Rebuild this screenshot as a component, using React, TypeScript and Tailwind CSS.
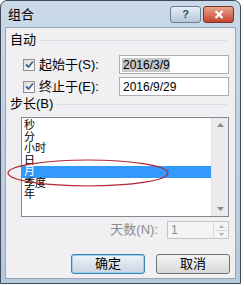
import React from 'react';

const font = { fontFamily: '"Liberation Sans", "Noto Sans CJK SC", sans-serif' };

function Check() {
  return (
    <span className="w-[12px] h-[12px] border border-[#8e8f8f] bg-gradient-to-br from-[#dcdcdc] to-white flex items-center justify-center">
      <svg width="9" height="9" viewBox="0 0 9 9">
        <path d="M1 4.5 L3.5 7 L8 1.5" fill="none" stroke="#4a5f97" strokeWidth="1.8" />
      </svg>
    </span>
  );
}

export default function App() {
  const items = ['秒', '分', '小时', '日', '月', '季度', '年'];
  return (
    <div className="w-[244px] h-[286px] bg-white overflow-hidden" style={font}>
      <div className="w-[241px] h-[284px] rounded-t-[7px] border border-[#3c4a5a] bg-gradient-to-b from-[#c9d9e8] to-[#b5c9dc] flex flex-col px-[4px] pb-[4px]">
        {/* title bar */}
        <div className="h-[26px] flex items-center justify-between shrink-0">
          <span className="text-[13px] leading-[16px] text-black pl-[3px] pt-[2px]">组合</span>
          <div className="flex gap-[2px] pt-[1px] pr-[2px]">
            <div className="w-[31px] h-[17px] rounded-[3px] border border-[#6e7f92] bg-gradient-to-b from-[#e6eef6] to-[#b6c7d8] flex items-center justify-center text-[11px] font-bold text-[#34495e]">?</div>
            <div className="w-[31px] h-[17px] rounded-[3px] border border-[#7a3226] bg-gradient-to-b from-[#e7a38f] to-[#c5432c] flex items-center justify-center">
              <svg width="10" height="9" viewBox="0 0 10 9">
                <path d="M1.5 1 L8.5 8 M8.5 1 L1.5 8" stroke="white" strokeWidth="2.2" />
              </svg>
            </div>
          </div>
        </div>
        {/* body */}
        <div className="flex-1 bg-[#f0eff1] border border-[#9aa5b1] relative text-[13px] leading-[14px] text-black">
          <div className="flex items-center h-[14px] mt-[5px] pl-[4px] pr-[8px] gap-[4px]">
            <span>自动</span>
            <div className="flex-1 h-px bg-[#d5dfe5]" />
          </div>
          <div className="flex flex-col gap-[3px] mt-[8px] pl-[17px] pr-[6px]">
            <div className="flex items-center h-[19px]">
              <Check />
              <span className="ml-[4px] w-[80px]">起始于(S):</span>
              <div className="flex-1 h-[19px] border border-[#abadb3] bg-white flex items-center pl-[2px] text-[12px]">
                <span className="bg-[#c8c8c8] pl-[1px]">2016/3/9</span>
              </div>
            </div>
            <div className="flex items-center h-[19px]">
              <Check />
              <span className="ml-[4px] w-[80px]">终止于(E):</span>
              <div className="flex-1 h-[19px] border border-[#abadb3] bg-white flex items-center pl-[3px] text-[12px]">
                2016/9/29
              </div>
            </div>
          </div>
          <div className="flex items-center h-[14px] mt-[1px] pl-[4px] pr-[8px] gap-[4px]">
            <span>步长(B)</span>
            <div className="flex-1 h-px bg-[#d5dfe5]" />
          </div>
          <div className="mt-[6px] ml-[15px] mr-[6px] h-[100px] border border-[#828790] bg-white flex">
            <div className="flex-1 flex flex-col pt-[2px] text-[11px] leading-[11.5px]">
              {items.map((t) => (
                <div key={t} className={t === '月' ? 'bg-[#3399ff] text-white pl-[2px] h-[11.5px]' : 'pl-[2px] h-[11.5px]'}>
                  {t}
                </div>
              ))}
            </div>
            <div className="w-[17px] bg-[#eceaec] border-l border-[#e0dee0] flex flex-col justify-between items-center py-[5px]">
              <svg width="7" height="4" viewBox="0 0 7 4"><path d="M0 4 L3.5 0 L7 4 Z" fill="#8c8c8c" /></svg>
              <svg width="7" height="4" viewBox="0 0 7 4"><path d="M0 0 L3.5 4 L7 0 Z" fill="#8c8c8c" /></svg>
            </div>
          </div>
          <div className="flex items-center justify-end mt-[4px] pr-[6px]">
            <span className="text-[#8d8d8d] mr-[9px]">天数(N):</span>
            <div className="w-[62px] h-[18px] border border-[#c5c5c5] bg-[#f4f4f4] flex">
              <span className="flex-1 pl-[3px] text-[12px] text-[#8d8d8d] leading-[16px]">1</span>
              <div className="w-[15px] border-l border-[#d9d9d9] flex flex-col items-center justify-center gap-[2px]">
                <svg width="5" height="3" viewBox="0 0 5 3"><path d="M0 3 L2.5 0 L5 3 Z" fill="#b0b0b0" /></svg>
                <div className="w-[11px] h-px bg-[#d8d8d8]" />
                <svg width="5" height="3" viewBox="0 0 5 3"><path d="M0 0 L2.5 3 L5 0 Z" fill="#b0b0b0" /></svg>
              </div>
            </div>
          </div>
          <div className="flex justify-end gap-[11px] mt-[15px] pr-[5px]">
            <div className="w-[74px] h-[20px] rounded-[3px] border border-[#3c7fb1] bg-gradient-to-b from-[#eef3f8] to-[#c9d6e2] flex items-center justify-center shadow-[inset_0_0_0_1px_#9bd1f0]">确定</div>
            <div className="w-[74px] h-[20px] rounded-[3px] border border-[#707070] bg-gradient-to-b from-[#f4f4f4] to-[#d8d8d8] flex items-center justify-center">取消</div>
          </div>
          {/* red annotation ellipse */}
          <svg className="absolute left-0 top-[128px]" width="170" height="34" viewBox="0 0 170 34">
            <ellipse cx="82" cy="17" rx="80" ry="13" fill="none" stroke="#b5242f" strokeWidth="1.2" />
          </svg>
        </div>
      </div>
    </div>
  );
}
